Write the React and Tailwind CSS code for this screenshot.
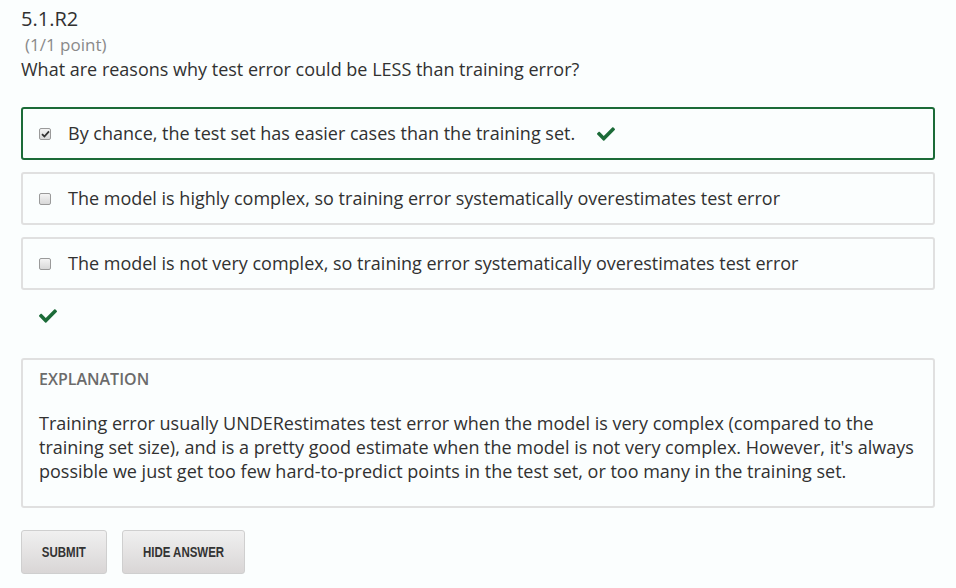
import React from 'react';
import { FaCheck } from 'react-icons/fa';

const options = [
  { text: 'By chance, the test set has easier cases than the training set.', checked: true },
  { text: 'The model is highly complex, so training error systematically overestimates test error', checked: false },
  { text: 'The model is not very complex, so training error systematically overestimates test error', checked: false },
];

const Box = ({ checked }) => (
  <span className="flex h-[12px] w-[12px] items-center justify-center rounded-[2px] border border-[#9a9a9a] bg-gradient-to-b from-[#f4f4f4] to-[#d8d8d8]">
    {checked && (
      <svg width="9" height="8" viewBox="0 0 9 8">
        <path d="M1 4.2 L3.4 6.5 L8 1.4" stroke="#333" strokeWidth="1.8" fill="none" />
      </svg>
    )}
  </span>
);

const App = () => {
  return (
    <div className="min-h-[588px] bg-[#fbfefe] px-[21px] pt-[6px] text-[#313131]" style={{ fontFamily: '"Open Sans", sans-serif' }}>
      <h2 className="text-[20px] leading-[26px]">5.1.R2</h2>
      <div className="pl-[4px] text-[17px] leading-[26px] text-[#8a8a8a]">(1/1 point)</div>
      <p className="text-[18px] leading-[22px]">What are reasons why test error could be LESS than training error?</p>

      <div className="mt-[27px] flex w-[914px] flex-col gap-[12px]">
        {options.map((o, i) => (
          <label
            key={i}
            className={`flex h-[53px] items-center rounded-[3px] border-2 pl-[16px] text-[18px] ${
              o.checked ? 'border-[#1b6b38]' : 'border-[#e0e0e0]'
            }`}
          >
            <Box checked={o.checked} />
            <span className="ml-[17px]">{o.text}</span>
            {o.checked && <FaCheck className="ml-[22px] text-[#1b6b38]" size={18} />}
          </label>
        ))}
      </div>

      <div className="mt-[17px] pl-[18px]">
        <FaCheck className="text-[#1b6b38]" size={18} />
      </div>

      <div className="mt-[33px] w-[914px] rounded-[3px] border-2 border-[#e0e0e0] px-[16px] pb-[23px] pt-[8px]">
        <div className="text-[16px] font-semibold leading-[22px] text-[#6b6b6b]">EXPLANATION</div>
        <p className="mt-[21px] text-[18px] leading-[24px]">
          Training error usually UNDERestimates test error when the model is very complex (compared to the training set size), and is a pretty good estimate when the model is not very complex. However, it's always possible we just get too few hard-to-predict points in the test set, or too many in the training set.
        </p>
      </div>

      <div className="mt-[22px] flex gap-[15px]" style={{ fontFamily: '"Liberation Sans", Arial, sans-serif' }}>
        <button className="flex h-[44px] w-[86px] items-center justify-center rounded-[3px] border border-[#cfcfcf] bg-gradient-to-b from-[#f0f0f0] to-[#d9d6d6] text-[14px] font-bold text-[#333]">
          <span className="inline-block scale-x-[0.82] whitespace-nowrap">SUBMIT</span>
        </button>
        <button className="flex h-[44px] w-[123px] items-center justify-center rounded-[3px] border border-[#cfcfcf] bg-gradient-to-b from-[#f0f0f0] to-[#d9d6d6] text-[14px] font-bold text-[#333]">
          <span className="inline-block scale-x-[0.82] whitespace-nowrap">HIDE ANSWER</span>
        </button>
      </div>
    </div>
  );
};

export default App;
